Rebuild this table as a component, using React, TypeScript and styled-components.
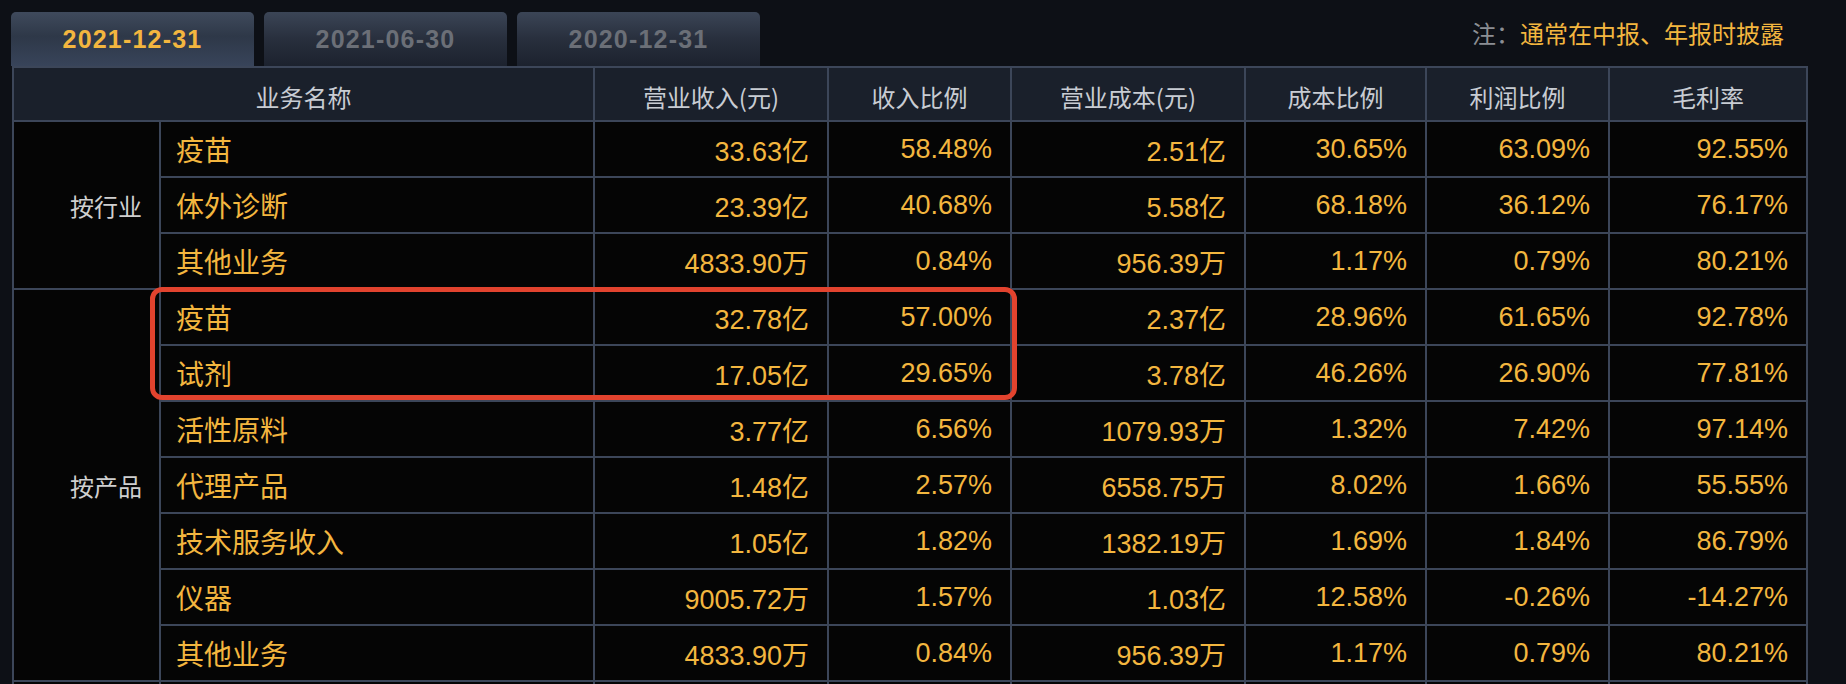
import React from 'react'
import styled, { createGlobalStyle } from 'styled-components'

const GlobalStyle = createGlobalStyle`
  html, body {
    margin: 0;
    padding: 0;
    overflow: hidden;
    background: #0d1016;
  }
  body {
    font-family: 'Liberation Sans', 'Noto Sans CJK SC', sans-serif;
  }
`

const tabs = ['2021-12-31', '2021-06-30', '2020-12-31']

const columns = ['营业收入(元)', '收入比例', '营业成本(元)', '成本比例', '利润比例', '毛利率']

type Row = [string, string, string, string, string, string, string]

const groups: { label: string; rows: Row[] }[] = [
  {
    label: '按行业',
    rows: [
      ['疫苗', '33.63亿', '58.48%', '2.51亿', '30.65%', '63.09%', '92.55%'],
      ['体外诊断', '23.39亿', '40.68%', '5.58亿', '68.18%', '36.12%', '76.17%'],
      ['其他业务', '4833.90万', '0.84%', '956.39万', '1.17%', '0.79%', '80.21%'],
    ],
  },
  {
    label: '按产品',
    rows: [
      ['疫苗', '32.78亿', '57.00%', '2.37亿', '28.96%', '61.65%', '92.78%'],
      ['试剂', '17.05亿', '29.65%', '3.78亿', '46.26%', '26.90%', '77.81%'],
      ['活性原料', '3.77亿', '6.56%', '1079.93万', '1.32%', '7.42%', '97.14%'],
      ['代理产品', '1.48亿', '2.57%', '6558.75万', '8.02%', '1.66%', '55.55%'],
      ['技术服务收入', '1.05亿', '1.82%', '1382.19万', '1.69%', '1.84%', '86.79%'],
      ['仪器', '9005.72万', '1.57%', '1.03亿', '12.58%', '-0.26%', '-14.27%'],
      ['其他业务', '4833.90万', '0.84%', '956.39万', '1.17%', '0.79%', '80.21%'],
    ],
  },
]

const App = () => {
  return (
    <React.Fragment>
      <GlobalStyle />
      <Page>
        <TabBar>
          {tabs.map((t, i) => (
            <Tab key={t} $active={i === 0}>
              {t}
            </Tab>
          ))}
          <Note>
            <NoteLabel>注：</NoteLabel>
            通常在中报、年报时披露
          </Note>
        </TabBar>
        <TableWrap>
          <Grid>
            <HeadCell $span={2}>业务名称</HeadCell>
            {columns.map((c) => (
              <HeadCell key={c}>{c}</HeadCell>
            ))}
            {groups.map((g) => (
              <React.Fragment key={g.label}>
                <GroupCell $rows={g.rows.length}>{g.label}</GroupCell>
                {g.rows.map((r, ri) => (
                  <React.Fragment key={ri}>
                    <NameCell>{r[0]}</NameCell>
                    {r.slice(1).map((v, vi) => (
                      <ValueCell key={vi}>{v}</ValueCell>
                    ))}
                  </React.Fragment>
                ))}
              </React.Fragment>
            ))}
            {/* next group starts just below the fold */}
            <GroupCell $rows={1} />
            <NameCell />
            {columns.map((c) => (
              <ValueCell key={c} />
            ))}
          </Grid>
          <Highlight />
        </TableWrap>
      </Page>
    </React.Fragment>
  )
}

export default App

const Page = styled.div`
  width: 1796px;
  padding-left: 12px;
  height: 684px;
  overflow: hidden;
`

const TabBar = styled.div`
  display: flex;
  align-items: stretch;
  gap: 10px;
  height: 54px;
  padding-top: 12px;
  margin-left: -1px;
`

const Tab = styled.div<{ $active?: boolean }>`
  width: 243px;
  display: flex;
  align-items: center;
  justify-content: center;
  border-radius: 5px 5px 0 0;
  font-family: 'Liberation Sans', sans-serif;
  font-weight: bold;
  font-size: 25px;
  letter-spacing: 1.2px;
  color: ${(p) => (p.$active ? '#f3b63f' : '#6b6f77')};
  background: ${(p) =>
    p.$active
      ? 'linear-gradient(#3f4a5c, #2e3848 45%, #38445a)'
      : 'linear-gradient(#3b4556, #282f3d 50%, #1c222e)'};
`

const Note = styled.div`
  margin-left: auto;
  margin-right: 24px;
  margin-top: 5px;
  align-self: flex-start;
  font-family: 'Noto Sans CJK SC', sans-serif;
  font-size: 24px;
  line-height: 32px;
  color: #f3b63f;
`

const NoteLabel = styled.span`
  color: #8b8e94;
`

const TableWrap = styled.div`
  position: relative;
`

const Grid = styled.div`
  display: grid;
  grid-template-columns: 145px 432px 232px 181px 232px 179px 181px 196px;
  grid-template-rows: 52px;
  grid-auto-rows: 54px;
  gap: 2px;
  padding: 2px;
  width: fit-content;
  background: #3c4659;
`

const HeadCell = styled.div<{ $span?: number }>`
  grid-column: span ${(p) => p.$span ?? 1};
  display: flex;
  align-items: center;
  justify-content: center;
  padding-top: 5px;
  box-sizing: border-box;
  background: #1a202b;
  color: #c8ccd3;
  font-family: 'Noto Sans CJK SC', sans-serif;
  font-size: 24px;
`

const GroupCell = styled.div<{ $rows: number }>`
  grid-row: span ${(p) => p.$rows};
  display: flex;
  align-items: center;
  justify-content: flex-end;
  padding-right: 17px;
  background: #050505;
  color: #cfcfcf;
  font-family: 'Noto Sans CJK SC', sans-serif;
  font-size: 24px;
`

const NameCell = styled.div`
  display: flex;
  align-items: center;
  padding-left: 15px;
  background: #050505;
  color: #f3b63f;
  font-family: 'Noto Sans CJK SC', sans-serif;
  font-size: 28px;
`

const ValueCell = styled.div`
  display: flex;
  align-items: center;
  justify-content: flex-end;
  padding-right: 18px;
  background: #050505;
  color: #f3b63f;
  font-family: 'Liberation Sans', 'Noto Sans CJK SC', sans-serif;
  font-size: 27px;
`

const Highlight = styled.div`
  position: absolute;
  left: 138px;
  top: 221px;
  width: 867px;
  height: 113px;
  box-sizing: border-box;
  border: 5px solid #e2432e;
  border-radius: 12px;
  pointer-events: none;
`
